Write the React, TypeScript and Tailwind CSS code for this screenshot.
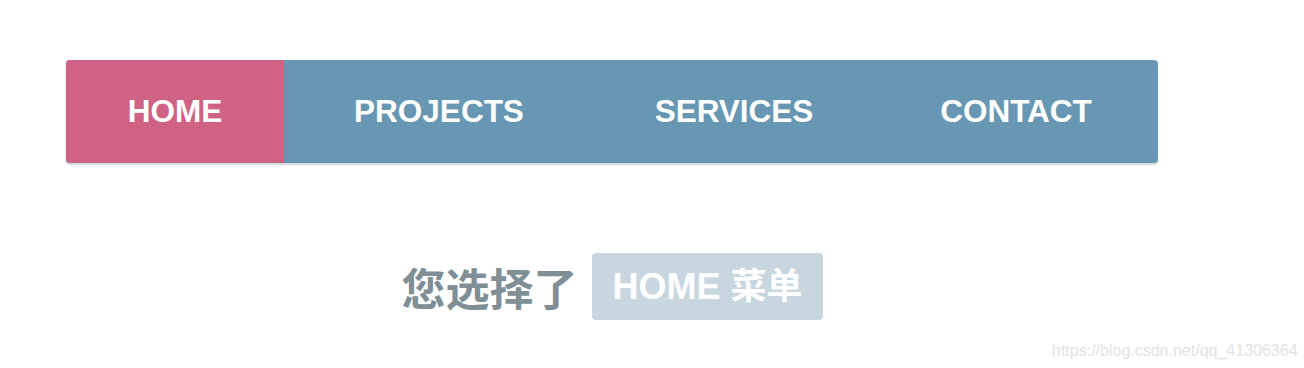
import React from "react";

const items = [
  { label: "HOME", w: "w-[218px]", active: true },
  { label: "PROJECTS", w: "w-[310px]", active: false },
  { label: "SERVICES", w: "w-[280px]", active: false },
  { label: "CONTACT", w: "w-[284px]", active: false },
];

export default function App() {
  return (
    <div className="relative w-[1304px] h-[368px] bg-white overflow-hidden font-['Liberation_Sans','Noto_Sans_CJK_SC',sans-serif]">
      <div className="w-[1224px] flex flex-col items-center pt-[60px]">
        <nav className="flex bg-[#6797b2] rounded-[4px] shadow-[0_2px_2px_#cfd6da]">
          {items.map((it) => (
            <a
              key={it.label}
              className={
                it.active
                  ? `${it.w} h-[103px] flex items-center justify-center text-white font-bold text-[31.5px] leading-none bg-[#d06283] rounded-l-[4px]`
                  : `${it.w} h-[103px] flex items-center justify-center text-white font-bold text-[31.5px] leading-none`
              }
            >
              {it.label}
            </a>
          ))}
        </nav>
        <p className="mt-[90px] flex items-center text-[44px] font-bold text-[#808f96] leading-none font-['Noto_Sans_CJK_SC',sans-serif]">
          <span>您选择了</span>
          <b className="ml-[15px] h-[67px] flex items-center px-[20px] bg-[#c8d6df] rounded-[4px] text-white text-[36px] font-bold font-['Liberation_Sans','Noto_Sans_CJK_SC',sans-serif]">
            HOME 菜单
          </b>
        </p>
      </div>
      <div className="absolute left-[1052px] top-[339px] text-[16px] text-[#e3e3e3]">
        https://blog.csdn.net/qq_41306364
      </div>
    </div>
  );
}
